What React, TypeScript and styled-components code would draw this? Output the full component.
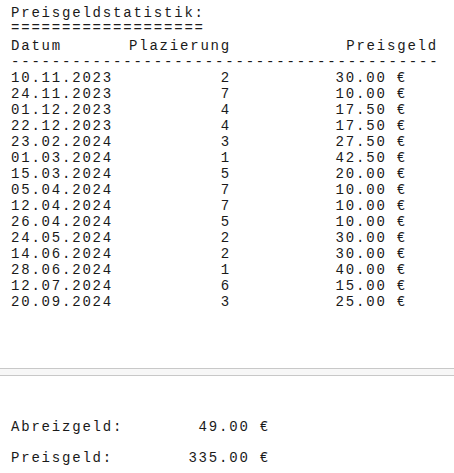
import React from 'react';
import styled, { createGlobalStyle } from 'styled-components';

const GlobalStyle = createGlobalStyle`
  html, body {
    margin: 0;
    padding: 0;
    background: #ffffff;
  }
`;

const Page = styled.div`
  width: 454px;
  height: 473px;
  display: flex;
  flex-direction: column;
  font-family: 'Liberation Mono', 'Courier New', monospace;
  font-size: 14px;
  letter-spacing: 1.8px;
  line-height: 16px;
  color: #1a1a1a;
  overflow: hidden;
`;

const StatsPanel = styled.div`
  height: 368px;
  padding: 5px 0 0 11px;
  box-sizing: border-box;
`;

const Line = styled.div<{ $gap?: number }>`
  height: 16px;
  white-space: pre;
  margin-top: ${(p) => p.$gap ?? 0}px;
`;

const Row = styled.div<{ $gap?: number }>`
  display: grid;
  grid-template-columns: 100px 120px 207px;
  height: 16px;
  white-space: pre;
  margin-top: ${(p) => p.$gap ?? 0}px;
`;

const Cell = styled.span<{ $pad?: number }>`
  text-align: right;
  padding-right: ${(p) => p.$pad ?? 0}px;
`;

const Splitter = styled.div`
  height: 6px;
  border-top: 1px solid #c8c8c8;
  border-bottom: 1px solid #c8c8c8;
  background: #f7f7f7;
`;

const SummaryPanel = styled.div`
  flex: 1;
  padding: 43px 0 0 11px;
  display: flex;
  flex-direction: column;
  gap: 15px;
`;

const SummaryRow = styled.div`
  display: grid;
  grid-template-columns: 150px 109px;
  height: 16px;
  white-space: pre;
`;

const rows: [string, number, string][] = [
  ['10.11.2023', 2, '30.00'],
  ['24.11.2023', 7, '10.00'],
  ['01.12.2023', 4, '17.50'],
  ['22.12.2023', 4, '17.50'],
  ['23.02.2024', 3, '27.50'],
  ['01.03.2024', 1, '42.50'],
  ['15.03.2024', 5, '20.00'],
  ['05.04.2024', 7, '10.00'],
  ['12.04.2024', 7, '10.00'],
  ['26.04.2024', 5, '10.00'],
  ['24.05.2024', 2, '30.00'],
  ['14.06.2024', 2, '30.00'],
  ['28.06.2024', 1, '40.00'],
  ['12.07.2024', 6, '15.00'],
  ['20.09.2024', 3, '25.00'],
];

export default function App() {
  return (
    <Page>
      <GlobalStyle />
      <StatsPanel>
        <Line>Preisgeldstatistik:</Line>
        <Line $gap={-1}>{'='.repeat(19)}</Line>
        <Row $gap={2}>
          <span>Datum</span>
          <Cell>Plazierung</Cell>
          <Cell>Preisgeld</Cell>
        </Row>
        <Line>{'-'.repeat(42)}</Line>
        {rows.map(([date, place, amount]) => (
          <Row key={date}>
            <span>{date}</span>
            <Cell>{place}</Cell>
            <Cell $pad={31}>{amount} €</Cell>
          </Row>
        ))}
      </StatsPanel>
      <Splitter />
      <SummaryPanel>
        <SummaryRow>
          <span>Abreizgeld:</span>
          <Cell>49.00 €</Cell>
        </SummaryRow>
        <SummaryRow>
          <span>Preisgeld:</span>
          <Cell>335.00 €</Cell>
        </SummaryRow>
      </SummaryPanel>
    </Page>
  );
}
